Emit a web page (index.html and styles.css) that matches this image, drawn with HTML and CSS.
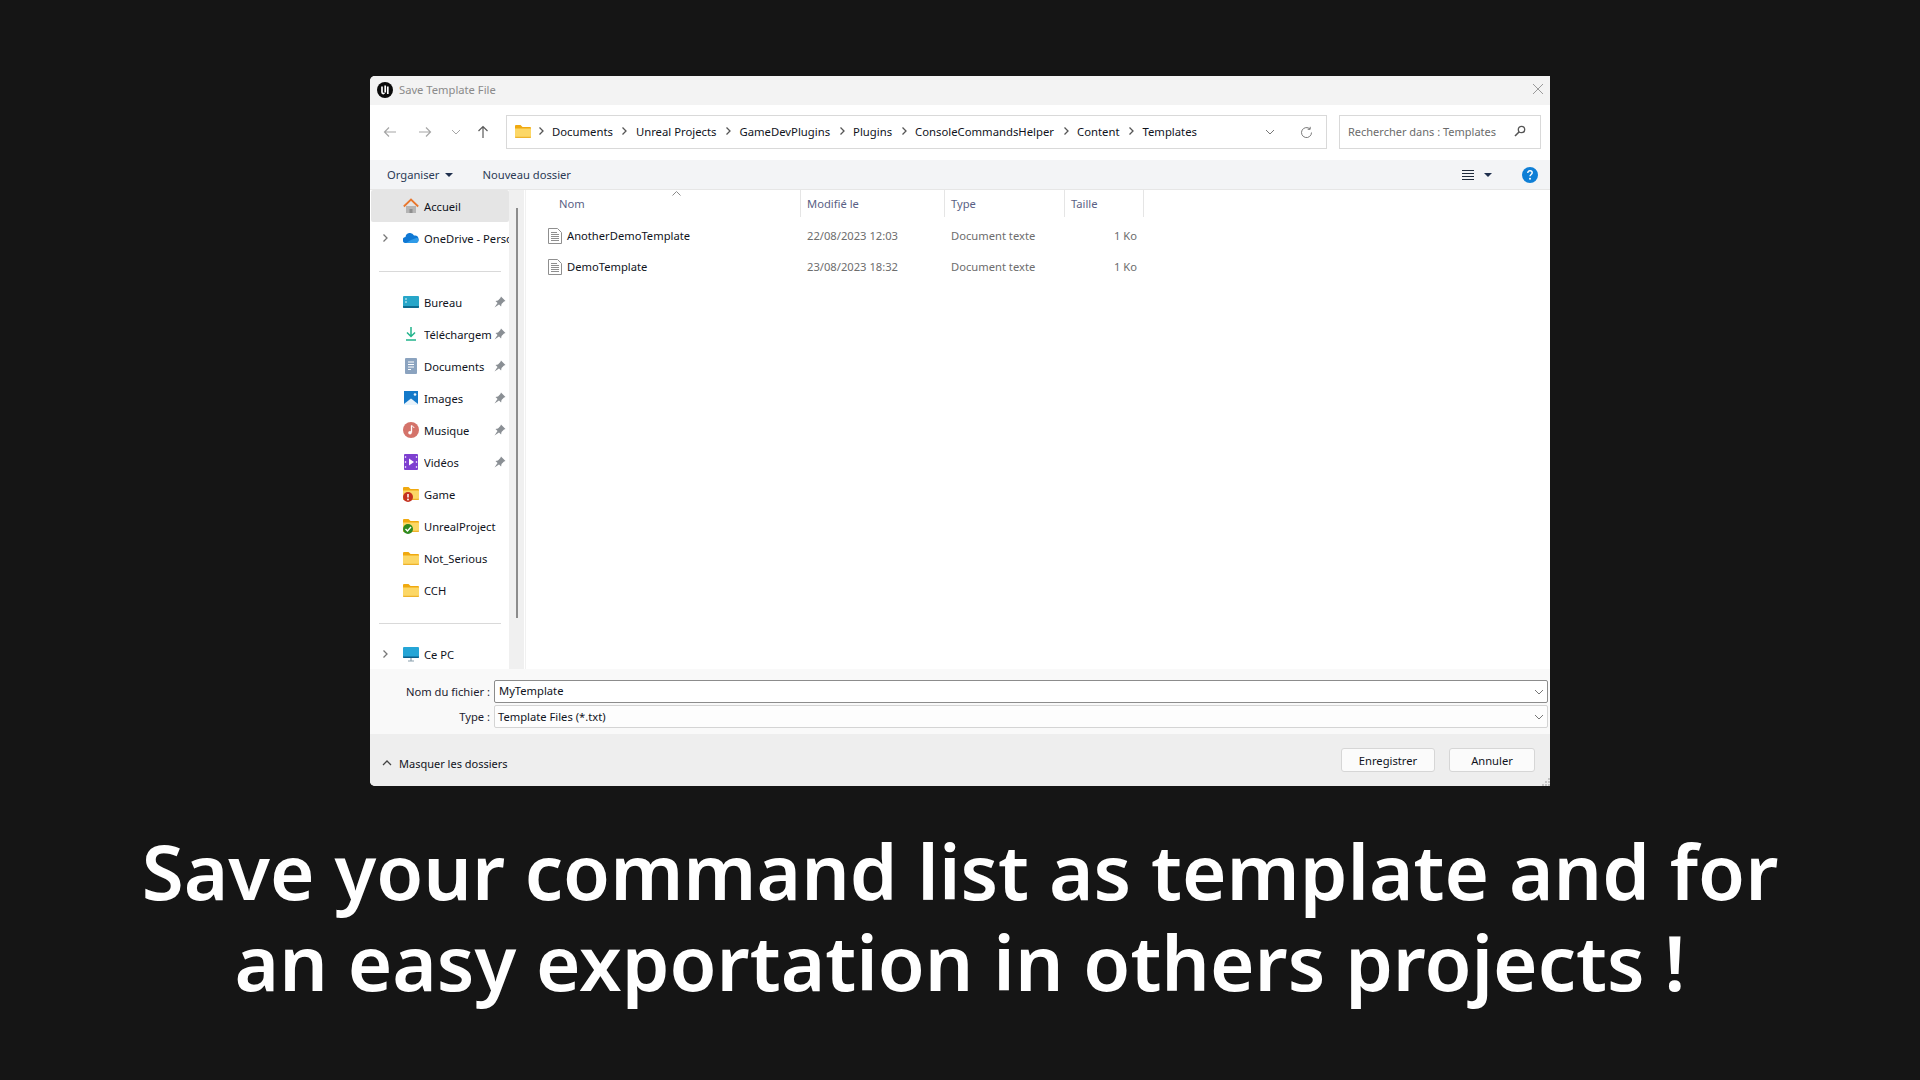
FILE: index.html
```html
<!DOCTYPE html>
<html>
<head>
<title>Save Template File</title>
<link rel="stylesheet" href="styles.css">
</head>
<body>
<svg class="defs" width="0" height="0">
  <symbol id="folder" viewBox="0 0 16 14">
    <path d="M0 2a1 1 0 0 1 1-1h4.500l2 2H15a1 1 0 0 1 1 1v1H0z" fill="#f0a90f"/>
    <path d="M0 4.500h16V13a1 1 0 0 1-1 1H1a1 1 0 0 1-1-1z" fill="#fcd766"/>
    <path d="M0 12.800h16V13a1 1 0 0 1-1 1H1a1 1 0 0 1-1-1z" fill="#edb22c"/>
  </symbol>
  <symbol id="pin" viewBox="0 0 12 12">
    <path d="M7 .5l4.500 4.500-1.500.6L7.500 8l-.4 2.500-5.600-5.600L4 4.500l2.400-2.400zM3.500 7L.5 11.500l4.500-3z" fill="#8a8f94"/>
  </symbol>
  <symbol id="chev-r" viewBox="0 0 8 10">
    <path d="M2.500 1.500L6 5 2.500 8.500" fill="none" stroke="currentColor" stroke-width="1.300"/>
  </symbol>
  <symbol id="chev-d" viewBox="0 0 10 6">
    <path d="M1 1l4 4 4-4" fill="none" stroke="currentColor" stroke-width="1"/>
  </symbol>
  <symbol id="doc" viewBox="0 0 14 16">
    <path d="M.5.500h9l4 4v11H.5z" fill="#fff" stroke="#8f8f8f"/>
    <path d="M3 4.500h6M3 6.500h8M3 8.500h8M3 10.500h8M3 12.500h8" stroke="#8f8f8f"/>
  </symbol>
</svg>

<div class="dialog">
  <div class="titlebar">
    <svg class="ue-logo" width="16" height="16" viewBox="0 0 16 16">
      <circle cx="8" cy="8" r="8" fill="#0b0b0b"/>
      <path d="M5 4.500v5.500c0 1.500 1.500 2 2.500 1M8.200 3.500V10.500M10.800 4.500v7.500" fill="none" stroke="#fff" stroke-width="1.700"/>
    </svg>
    <span class="title-text">Save Template File</span>
    <svg class="close" width="12" height="12" viewBox="0 0 12 12"><path d="M1 1l10 10M11 1L1 11" stroke="#9a9a9a" stroke-width="1"/></svg>
  </div>

  <div class="navbar">
    <div class="nav-btns">
      <svg width="14" height="12" viewBox="0 0 14 12"><path d="M13 6H1.500M6 1.500L1.500 6 6 10.500" fill="none" stroke="#a6a6a6" stroke-width="1.200"/></svg>
      <svg width="14" height="12" viewBox="0 0 14 12"><path d="M1 6h11.500M8 1.500L12.500 6 8 10.500" fill="none" stroke="#a6a6a6" stroke-width="1.200"/></svg>
      <svg class="nav-down" width="10" height="6"><use href="#chev-d"/></svg>
      <svg class="nav-up" width="12" height="14" viewBox="0 0 12 14"><path d="M6 13V1.500M1.500 6L6 1.500 10.500 6" fill="none" stroke="#5a5a5a" stroke-width="1.200"/></svg>
    </div>
    <div class="address">
      <svg class="address-folder" width="16" height="14"><use href="#folder"/></svg>
      <svg class="crumb-sep" width="8" height="10"><use href="#chev-r"/></svg>
      <span>Documents</span>
      <svg class="crumb-sep" width="8" height="10"><use href="#chev-r"/></svg>
      <span>Unreal Projects</span>
      <svg class="crumb-sep" width="8" height="10"><use href="#chev-r"/></svg>
      <span>GameDevPlugins</span>
      <svg class="crumb-sep" width="8" height="10"><use href="#chev-r"/></svg>
      <span>Plugins</span>
      <svg class="crumb-sep" width="8" height="10"><use href="#chev-r"/></svg>
      <span>ConsoleCommandsHelper</span>
      <svg class="crumb-sep" width="8" height="10"><use href="#chev-r"/></svg>
      <span>Content</span>
      <svg class="crumb-sep" width="8" height="10"><use href="#chev-r"/></svg>
      <span>Templates</span>
      <div class="address-end">
        <svg class="grey-chev" width="10" height="6"><use href="#chev-d"/></svg>
        <svg width="13" height="13" viewBox="0 0 13 13"><path d="M11.500 6.500a5 5 0 1 1-1.500-3.500M10.200 .8V3.300H7.700" fill="none" stroke="#7a7a7a" stroke-width="1"/></svg>
      </div>
    </div>
    <div class="search">
      <span>Rechercher dans : Templates</span>
      <svg width="12" height="12" viewBox="0 0 12 12"><circle cx="7.500" cy="4.500" r="3.200" fill="none" stroke="#555" stroke-width="1.300"/><path d="M5 7l-4 4" stroke="#555" stroke-width="1.600"/></svg>
    </div>
  </div>

  <div class="commandbar">
    <span class="organize">Organiser</span>
    <span class="caret"></span>
    <span class="new-folder">Nouveau dossier</span>
    <div class="view-tools">
      <svg width="12" height="10" viewBox="0 0 12 10"><path d="M0 .5h12M0 3.500h12M0 6.500h12M0 9.500h12" stroke="#1f2a3a"/></svg>
      <span class="caret"></span>
      <svg class="help" width="16" height="16" viewBox="0 0 16 16"><circle cx="8" cy="8" r="8" fill="#0f7fd6"/><path d="M5.800 6c0-1.500 1-2.200 2.200-2.200s2.200.8 2.200 2c0 1.700-2.200 1.800-2.200 3.500" fill="none" stroke="#fff" stroke-width="1.400"/><circle cx="8" cy="11.800" r="1" fill="#fff"/></svg>
    </div>
  </div>

  <div class="main">
    <div class="sidebar">
      <div class="side-row selected">
        <span class="side-chev"></span>
        <svg class="side-icon" width="16" height="16" viewBox="0 0 16 16"><path d="M3 8h10v7H3z" fill="#b5b5b5"/><path d="M6.500 11h3v4h-3z" fill="#8e8e8e"/><path d="M.8 8.500L8 1.500l7.200 7" fill="none" stroke="#e8772e" stroke-width="1.800"/></svg>
        <span class="side-label">Accueil</span>
      </div>
      <div class="side-row">
        <svg class="side-chev" width="8" height="10"><use href="#chev-r"/></svg>
        <svg class="side-icon" width="16" height="16" viewBox="0 0 16 16"><path d="M3 13a3 3 0 0 1-.5-6A4.500 4.500 0 0 1 11 5.500 3.800 3.800 0 0 1 12.500 13z" fill="#0f78d4"/><path d="M3 13h9.500a3 3 0 0 0 3-3c0-1-.5-1.800-1.500-2.300L8 10z" fill="#2f9be8"/></svg>
        <span class="side-label">OneDrive - Personnel</span>
      </div>
      <div class="side-sep"></div>
      <div class="side-row">
        <span class="side-chev"></span>
        <svg class="side-icon" width="16" height="16" viewBox="0 0 16 16"><rect y="2" width="16" height="12" rx="1" fill="#27a6c9"/><path d="M0 12h16v1a1 1 0 0 1-1 1H1a1 1 0 0 1-1-1z" fill="#0d6b8f"/><path d="M2 5h2M2 8h2" stroke="#dff3f8"/></svg>
        <span class="side-label short">Bureau</span>
        <svg class="pin" width="12" height="12"><use href="#pin"/></svg>
      </div>
      <div class="side-row">
        <span class="side-chev"></span>
        <svg class="side-icon" width="16" height="16" viewBox="0 0 16 16"><path d="M8 1v9M4 6.500L8 10.500l4-4M3 14h10" fill="none" stroke="#22b48c" stroke-width="1.500"/></svg>
        <span class="side-label short">Téléchargements</span>
        <svg class="pin" width="12" height="12"><use href="#pin"/></svg>
      </div>
      <div class="side-row">
        <span class="side-chev"></span>
        <svg class="side-icon" width="16" height="16" viewBox="0 0 16 16"><rect x="2" width="12" height="16" rx="1" fill="#8ba3bf"/><path d="M5 4h6M5 6.500h6M5 9h6M5 11.500h3" stroke="#fff"/></svg>
        <span class="side-label short">Documents</span>
        <svg class="pin" width="12" height="12"><use href="#pin"/></svg>
      </div>
      <div class="side-row">
        <span class="side-chev"></span>
        <svg class="side-icon" width="16" height="16" viewBox="0 0 16 16"><rect x="1" y="1" width="14" height="14" fill="#1479c9"/><path d="M1 14l7-5.500 7 5.500v1H1z" fill="#e8f3fb"/><circle cx="12" cy="4.500" r="1.300" fill="#e8f3fb"/></svg>
        <span class="side-label short">Images</span>
        <svg class="pin" width="12" height="12"><use href="#pin"/></svg>
      </div>
      <div class="side-row">
        <span class="side-chev"></span>
        <svg class="side-icon" width="16" height="16" viewBox="0 0 16 16"><circle cx="8" cy="8" r="8" fill="#d4736a"/><path d="M8.500 3.500v7" stroke="#fff" stroke-width="1.300"/><path d="M8.500 3.500c1 1 2.500 1 2.500 2.500" fill="none" stroke="#fff"/><circle cx="7" cy="10.800" r="1.800" fill="#fff"/></svg>
        <span class="side-label short">Musique</span>
        <svg class="pin" width="12" height="12"><use href="#pin"/></svg>
      </div>
      <div class="side-row">
        <span class="side-chev"></span>
        <svg class="side-icon" width="16" height="16" viewBox="0 0 16 16"><rect x="1" width="14" height="16" rx="1" fill="#7d3fd0"/><path d="M6 4.500l5 3.500-5 3.500z" fill="#fff"/><path d="M2.500 2v2M2.500 7v2M2.500 12v2M13.500 2v2M13.500 7v2M13.500 12v2" stroke="#d9c6f3" stroke-width="1.300"/></svg>
        <span class="side-label short">Vidéos</span>
        <svg class="pin" width="12" height="12"><use href="#pin"/></svg>
      </div>
      <div class="side-row">
        <span class="side-chev"></span>
        <svg class="side-icon" width="16" height="16" viewBox="0 0 16 16"><use href="#folder" width="16" height="14"/><circle cx="5" cy="11" r="5" fill="#c4321f"/><path d="M5 8v3.500" stroke="#fff" stroke-width="1.500"/><circle cx="5" cy="13.500" r=".9" fill="#fff"/></svg>
        <span class="side-label">Game</span>
      </div>
      <div class="side-row">
        <span class="side-chev"></span>
        <svg class="side-icon" width="16" height="16" viewBox="0 0 16 16"><use href="#folder" width="16" height="14"/><circle cx="5" cy="11" r="5" fill="#2f8a1f"/><path d="M2.500 11l2 2 3.500-4" fill="none" stroke="#fff" stroke-width="1.400"/></svg>
        <span class="side-label">UnrealProject</span>
      </div>
      <div class="side-row">
        <span class="side-chev"></span>
        <svg class="side-icon" width="16" height="14"><use href="#folder"/></svg>
        <span class="side-label">Not_Serious</span>
      </div>
      <div class="side-row">
        <span class="side-chev"></span>
        <svg class="side-icon" width="16" height="14"><use href="#folder"/></svg>
        <span class="side-label">CCH</span>
      </div>
      <div class="side-sep"></div>
      <div class="side-row">
        <svg class="side-chev" width="8" height="10"><use href="#chev-r"/></svg>
        <svg class="side-icon" width="16" height="16" viewBox="0 0 16 16"><rect y="1" width="16" height="11" rx="1" fill="#25a5d6"/><path d="M0 10.500h16V11a1 1 0 0 1-1 1H1a1 1 0 0 1-1-1z" fill="#0d5f8a"/><path d="M8 12v2.500M5 15h6" stroke="#8aa0ad" stroke-width="1.200"/></svg>
        <span class="side-label">Ce PC</span>
      </div>
    </div>
    <div class="side-scroll"><div class="side-thumb"></div></div>

    <div class="files">
      <div class="file-head">
        <div class="head-cell name-head">Nom<svg class="sort" width="9" height="5" viewBox="0 0 9 5"><path d="M.5 4.500l4-4 4 4" fill="none" stroke="#8a8a8a"/></svg></div>
        <div class="head-cell">Modifié le</div>
        <div class="head-cell">Type</div>
        <div class="head-cell">Taille</div>
      </div>
      <div class="file-row">
        <div class="file-name"><svg width="14" height="16"><use href="#doc"/></svg>AnotherDemoTemplate</div>
        <div class="file-meta">22/08/2023 12:03</div>
        <div class="file-meta">Document texte</div>
        <div class="file-meta file-size">1 Ko</div>
      </div>
      <div class="file-row">
        <div class="file-name"><svg width="14" height="16"><use href="#doc"/></svg>DemoTemplate</div>
        <div class="file-meta">23/08/2023 18:32</div>
        <div class="file-meta">Document texte</div>
        <div class="file-meta file-size">1 Ko</div>
      </div>
    </div>
  </div>

  <div class="fields">
    <div class="field-row">
      <label class="field-label">Nom du fichier :</label>
      <div class="field active"><span class="field-value">MyTemplate</span><svg class="grey-chev" width="10" height="6"><use href="#chev-d"/></svg></div>
    </div>
    <div class="field-row">
      <label class="field-label">Type :</label>
      <div class="field"><span>Template Files (*.txt)</span><svg class="grey-chev" width="10" height="6"><use href="#chev-d"/></svg></div>
    </div>
  </div>

  <div class="footer">
    <svg class="hide-chev" width="10" height="6" viewBox="0 0 10 6"><path d="M1 5l4-4 4 4" fill="none" stroke="#444" stroke-width="1.300"/></svg>
    <span class="hide-text">Masquer les dossiers</span>
    <button class="btn save">Enregistrer</button>
    <button class="btn cancel">Annuler</button>
    <svg class="grip" width="8" height="8" viewBox="0 0 8 8"><path d="M6 0h2v2H6zM3 3h2v2H3zM6 3h2v2H6zM0 6h2v2H0zM3 6h2v2H3zM6 6h2v2H6z" fill="#c4c4c4"/></svg>
  </div>
</div>

<div class="caption">Save your command list as template and for<br>an easy exportation in others projects !</div>
</body>
</html>
```

FILE: styles.css
```css
* {
  box-sizing: border-box;
}

html, body {
  margin: 0;
  height: 100%;
}

body {
  background-color: #151515;
  font-family: "Noto Sans", "Open Sans", sans-serif;
  display: flex;
  flex-direction: column;
  align-items: center;
  overflow: hidden;
}

.defs {
  position: absolute;
}

svg {
  display: block;
  flex: none;
}

.dialog {
  width: 1180px;
  height: 710px;
  flex: none;
  margin-top: 76px;
  display: flex;
  flex-direction: column;
  font-size: 11.2px;
  color: #10131c;
  background-color: #fff;
  border-radius: 5px 0 0 5px;
  overflow: hidden;
}

.titlebar {
  height: 29px;
  background-color: #f3f3f3;
  display: flex;
  align-items: center;
  padding: 0 6px 2px 7px;
}

.title-text {
  margin-left: 6px;
  color: #8a8a8a;
}

.close {
  margin-left: auto;
  margin-bottom: 2px;
}

.navbar {
  height: 55px;
  flex: none;
  display: flex;
  align-items: center;
  padding: 0 9px 1px 13px;
}

.nav-btns {
  width: 123px;
  display: flex;
  align-items: center;
  gap: 21px;
}

.nav-up {
  margin-left: -5px;
}

.nav-down {
  color: #a6a6a6;
  margin-left: -2px;
}

.address {
  width: 821px;
  height: 34px;
  border: 1px solid #d9d9d9;
  display: flex;
  align-items: center;
  padding: 0 0 2px 8px;
  gap: 7.5px;
  font-size: 11.3px;
}

.address-folder {
  margin-right: -2px;
}

.crumb-sep {
  color: #555;
}

.address-end {
  margin-left: auto;
  display: flex;
  align-items: center;
  gap: 25px;
  padding: 2px 13px 0 0;
}

.grey-chev {
  color: #777;
}

.search {
  width: 202px;
  height: 34px;
  margin-left: 12px;
  border: 1px solid #d9d9d9;
  display: flex;
  align-items: center;
  justify-content: space-between;
  padding: 0 14px 2px 8px;
  color: #6b6b6b;
  font-size: 11px;
}

.commandbar {
  height: 30px;
  flex: none;
  background-color: #f3f4f6;
  border-bottom: 1px solid #e6e6e6;
  display: flex;
  align-items: center;
  padding: 0 13px 0 17px;
  color: #2b3a55;
}

.caret {
  width: 0;
  height: 0;
  margin-left: 5px;
  border-left: 4px solid transparent;
  border-right: 4px solid transparent;
  border-top: 4px solid #1f2f4d;
}

.new-folder {
  margin-left: 30px;
}

.view-tools {
  margin-left: auto;
  display: flex;
  align-items: center;
  gap: 5px;
  margin-right: -1px;
}

.view-tools .caret {
  margin-left: 5px;
}

.help {
  margin-left: 25px;
}

.main {
  height: 479px;
  flex: none;
  display: flex;
}

.sidebar {
  width: 139px;
  padding-left: 1px;
  overflow: hidden;
}

.side-row {
  height: 32px;
  display: flex;
  align-items: center;
  padding-left: 10px;
  white-space: nowrap;
  overflow: hidden;
}

.selected {
  background-color: #e5e5e5;
  border-radius: 2px;
}

.side-chev {
  width: 8px;
  height: 10px;
  color: #777;
}

.side-icon {
  margin-left: 14px;
}

.side-label {
  margin-left: 5px;
}

.short {
  width: 68px;
  overflow: hidden;
}

.pin {
  margin-left: 2px;
}

.side-sep {
  height: 1px;
  background-color: #d9d9d9;
  margin: 17px 0 14px 8px;
  width: 122px;
}

.side-scroll {
  width: 16px;
  background-color: #f0f0f0;
  padding: 18px 6px 0 7px;
  border-right: 1px solid #fff;
}

.side-thumb {
  width: 2px;
  height: 410px;
  background-color: #8c8c8c;
}

.files {
  flex: 1;
  border-left: 1px solid #f1f1f1;
}

.file-head, .file-row {
  display: grid;
  grid-template-columns: 275px 144px 120px 79px;
  width: 618px;
}

.file-head {
  height: 27px;
  margin-bottom: 3px;
  color: #5a5f85;
}

.head-cell {
  display: flex;
  align-items: center;
  padding-left: 6px;
  border-right: 1px solid #e5e5e5;
}

.name-head {
  padding-left: 33px;
  position: relative;
}

.sort {
  position: absolute;
  left: 146px;
  top: 1px;
}

.file-row {
  height: 31px;
  align-items: center;
}

.file-name {
  display: flex;
  align-items: center;
  gap: 5px;
  padding-left: 22px;
}

.file-meta {
  padding-left: 6px;
  color: #6d6d6d;
}

.file-size {
  padding-right: 7px;
  text-align: right;
}

.fields {
  height: 65px;
  flex: none;
  background-color: #f9f9f9;
  padding-top: 11px;
  display: flex;
  flex-direction: column;
  gap: 2px;
}

.field-row {
  display: flex;
  align-items: center;
  padding-right: 2px;
}

.field-label {
  width: 120px;
  text-align: right;
  margin-right: 4px;
  color: #1c1b2e;
}

.field {
  flex: 1;
  height: 23px;
  background-color: #fdfdfd;
  border: 1px solid #d4d4d4;
  border-radius: 2px;
  display: flex;
  align-items: center;
  justify-content: space-between;
  padding: 0 3px;
}

.active {
  background-color: #fff;
  border-color: #8c8c8c;
}

.field-value {
  margin-left: 1px;
  margin-bottom: 2px;
}

.footer {
  height: 52px;
  flex: none;
  background-color: #eeeeee;
  display: flex;
  align-items: center;
  padding: 0 15px 0 12px;
  position: relative;
}

.hide-chev {
  margin-top: 6px;
}

.hide-text {
  margin-left: 7px;
  margin-top: 6px;
  font-size: 11px;
}

.btn {
  height: 24px;
  font-family: inherit;
  font-size: 11.2px;
  color: #10131c;
  background-color: #fbfbfb;
  border: 1px solid #d6d6d6;
  border-radius: 3px;
  padding: 0;
}

.save {
  width: 94px;
  margin-left: auto;
}

.cancel {
  width: 86px;
  margin-left: 14px;
}

.grip {
  position: absolute;
  right: 0;
  bottom: 0;
}

.caption {
  margin-top: 39px;
  color: #fff;
  font-size: 76.25px;
  font-weight: 600;
  line-height: 91px;
  text-align: center;
}
```
